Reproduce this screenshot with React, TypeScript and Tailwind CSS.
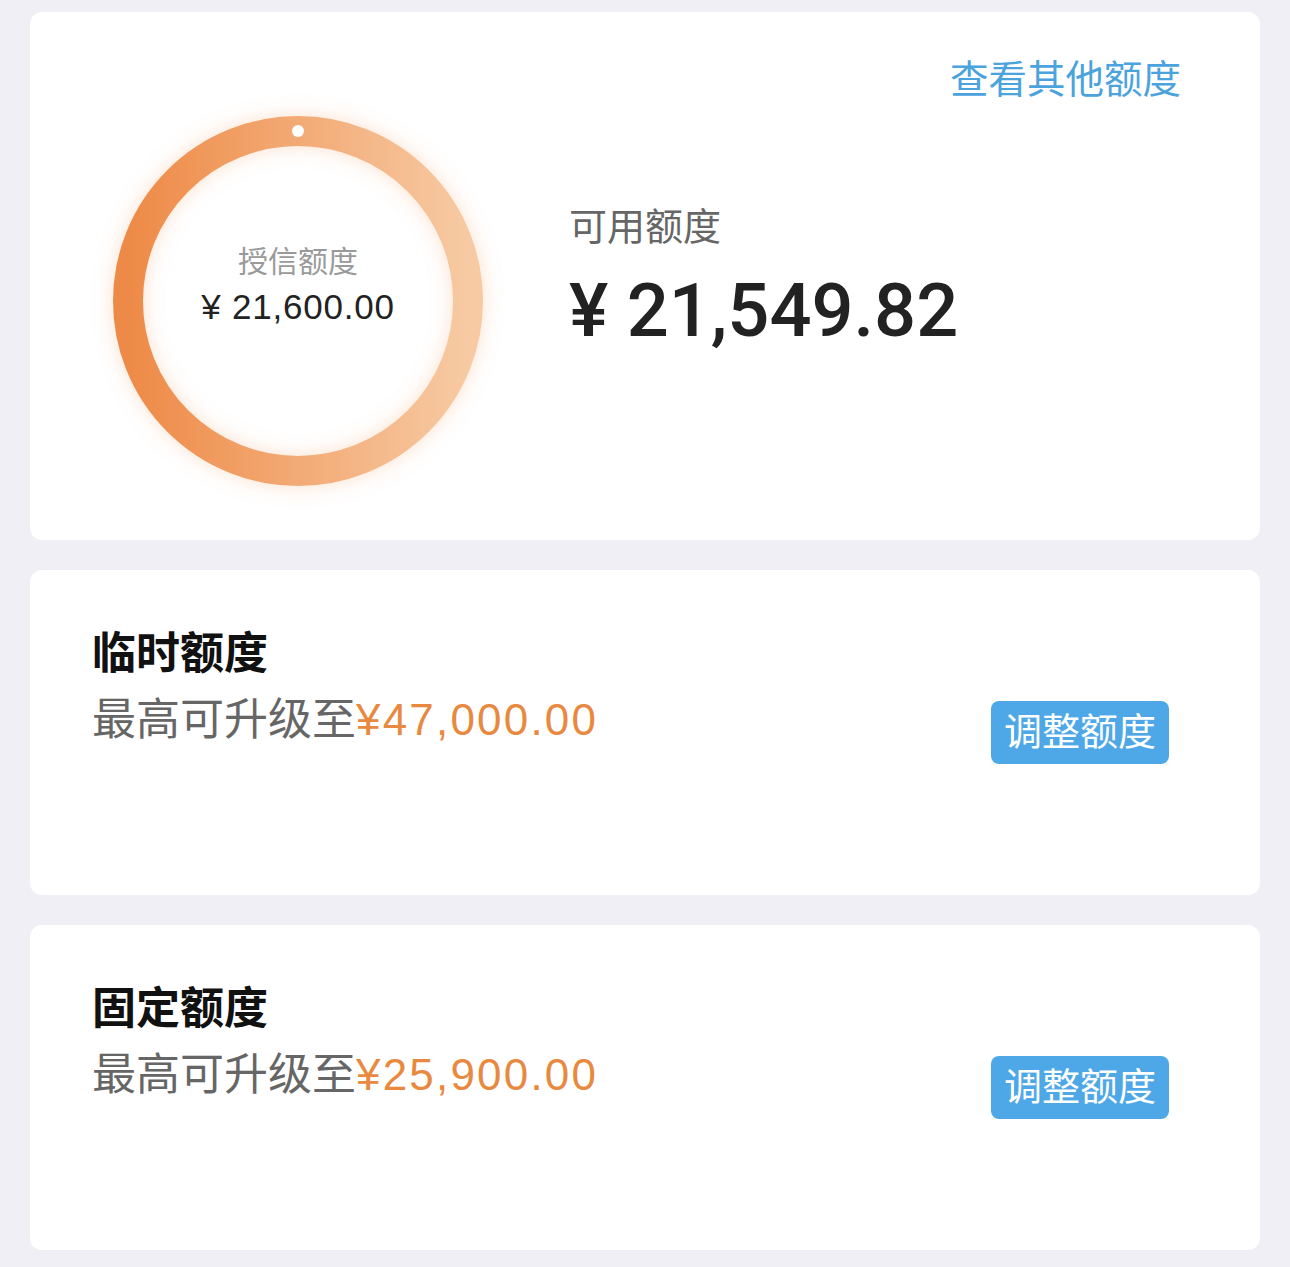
import React from 'react';

const font = { fontFamily: '"Liberation Sans", "Noto Sans CJK SC", sans-serif' };

function CreditRing({ total }: { total: string }) {
  return (
    <div className="relative w-[370px] h-[370px] shrink-0">
      <svg width="370" height="370" viewBox="0 0 370 370" className="overflow-visible">
        <defs>
          <linearGradient id="ringGrad" x1="0" y1="0" x2="1" y2="0">
            <stop offset="0%" stopColor="#ee8a47" />
            <stop offset="100%" stopColor="#f7caa3" />
          </linearGradient>
          <filter id="glow" x="-25%" y="-25%" width="150%" height="150%">
            <feDropShadow dx="0" dy="0" stdDeviation="10" floodColor="#f39a5c" floodOpacity="0.3" />
          </filter>
        </defs>
        <circle cx="185" cy="185" r="170" fill="none" stroke="url(#ringGrad)" strokeWidth="30" filter="url(#glow)" />
        <circle cx="185" cy="15" r="6" fill="#ffffff" />
      </svg>
      <div className="absolute inset-0 flex flex-col items-center justify-center pb-[30px]">
        <div className="text-[30px] leading-[40px] text-[#9a9a9a]">授信额度</div>
        <div className="text-[35px] leading-[46px] text-[#222] mt-[2px] tracking-[0.8px]">{total}</div>
      </div>
    </div>
  );
}

function QuotaCard({ title, amount }: { title: string; amount: string }) {
  return (
    <div className="bg-white rounded-[12px] h-[325px] pl-[62px] pr-[91px] pt-[58px] flex items-start justify-between">
      <div className="flex flex-col">
        <div className="text-[44px] leading-[52px] font-bold text-[#111]">{title}</div>
        <div className="text-[44px] leading-[52px] mt-[14px] text-[#666]">
          最高可升级至<span className="text-[#e8893f] tracking-[2.2px]">{amount}</span>
        </div>
      </div>
      <button className="mt-[73px] h-[63px] px-[13px] rounded-[8px] bg-[#4ea8e8] text-white text-[38px] leading-[63px]">
        调整额度
      </button>
    </div>
  );
}

export default function App() {
  return (
    <div className="min-h-[1267px] bg-[#efeff5] px-[30px] pt-[12px] pb-[16px] flex flex-col gap-[30px]" style={font}>
      <div className="bg-white rounded-[12px] h-[528px] pt-[45px] pl-[83px] pr-[79px] flex flex-col">
        <div className="flex justify-end">
          <span className="text-[38.5px] leading-[46px] text-[#4ba3dd]">查看其他额度</span>
        </div>
        <div className="flex items-start mt-[13px]">
          <CreditRing total="¥ 21,600.00" />
          <div className="ml-[86px] mt-[88px] flex flex-col">
            <div className="text-[38px] leading-[46px] text-[#666]">可用额度</div>
            <div className="mt-[21px] text-[74px] leading-[80px] font-medium text-[#222]" style={{ fontFamily: 'Roboto, "Liberation Sans", sans-serif' }}>
              ¥ 21,549.82
            </div>
          </div>
        </div>
      </div>
      <QuotaCard title="临时额度" amount="¥47,000.00" />
      <QuotaCard title="固定额度" amount="¥25,900.00" />
    </div>
  );
}
